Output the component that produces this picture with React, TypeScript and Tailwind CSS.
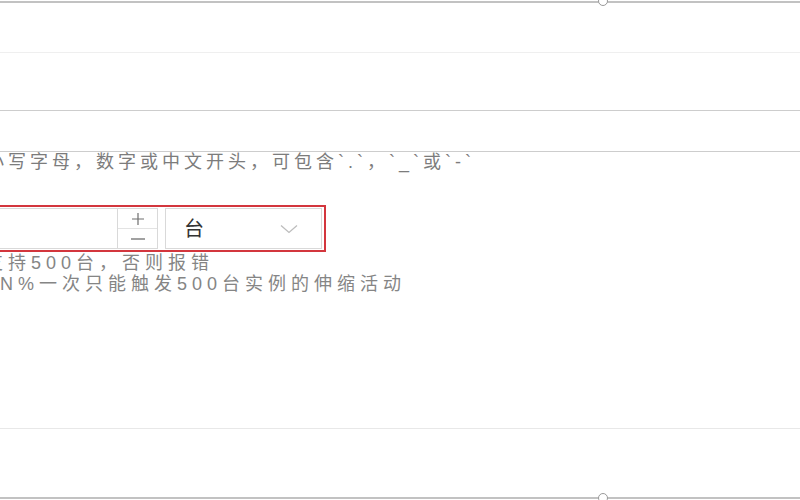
import React from 'react';

const font = { fontFamily: '"Liberation Sans", "Noto Sans CJK SC", sans-serif' };

function Handle({ top }: { top: string }) {
  return (
    <span
      className={`absolute left-[598px] ${top} w-[10px] h-[10px] rounded-full border border-[#9a9a9a] bg-white`}
    />
  );
}

function QuantityField() {
  return (
    <div className="-ml-[10px] w-[336px] h-[47px] border-2 border-[#d3363d] flex items-center pl-[2px] pr-[2px] gap-[7px]">
      {/* number input with stepper */}
      <div className="w-[164px] h-[41px] border border-[#d9d9d9] flex">
        <div className="flex-1" />
        <div className="w-[40px] border-l border-[#d9d9d9] flex flex-col">
          <button aria-label="increase" className="h-[20px] flex items-center justify-center border-b border-[#e3e3e3]">
            <svg width="14" height="14" viewBox="0 0 14 14" fill="none">
              <path d="M7 1 V13 M1 7 H13" stroke="#6e6e6e" strokeWidth="1.2" />
            </svg>
          </button>
          <button aria-label="decrease" className="flex-1 flex items-center justify-center">
            <svg width="16" height="4" viewBox="0 0 16 4" fill="none">
              <path d="M1 2 H15" stroke="#6e6e6e" strokeWidth="1.3" />
            </svg>
          </button>
        </div>
      </div>
      {/* unit select */}
      <div className="w-[157px] h-[41px] border border-[#d9d9d9] flex items-center justify-between pl-[18px] pr-[23px]">
        <span className="text-[20px] text-[#333]">台</span>
        <svg width="18" height="10" viewBox="0 0 18 10" fill="none">
          <path d="M1 1.5 L9 8.5 L17 1.5" stroke="#bdbdbd" strokeWidth="1.3" />
        </svg>
      </div>
    </div>
  );
}

export default function App() {
  return (
    <div className="relative w-[800px] h-[500px] bg-white overflow-hidden" style={font}>
      <div className="h-[1px]" />
      <div className="h-[2px] bg-[#c2c2c2]" />
      <div className="h-[49px]" />
      <div className="h-[1px] bg-[#efefef]" />
      <div className="h-[57px]" />
      <div className="h-[1px] bg-[#cdcdcd]" />
      <div className="h-[40px]" />
      <div className="h-[1px] bg-[#cdcdcd]" />

      <p className="-ml-[14px] text-[18px] leading-[20px] tracking-[4px] text-[#7c7c7c] whitespace-nowrap">
        小写字母，数字或中文开头，可包含`.`，`_`或`-`
      </p>

      <div className="mt-[33px]">
        <QuantityField />
      </div>

      <div className="mt-[1px] text-[18px] leading-[21px] tracking-[5px] text-[#858585] whitespace-nowrap">
        <p className="-ml-[15px]">支持500台，否则报错</p>
        <p>N%一次只能触发500台实例的伸缩活动</p>
      </div>

      <div className="mt-[133px] h-[1px] bg-[#e8e8e8]" />
      <div className="h-[68px]" />
      <div className="h-[2px] bg-[#c2c2c2]" />

      <Handle top="top-[-4px]" />
      <Handle top="top-[493px]" />
    </div>
  );
}
